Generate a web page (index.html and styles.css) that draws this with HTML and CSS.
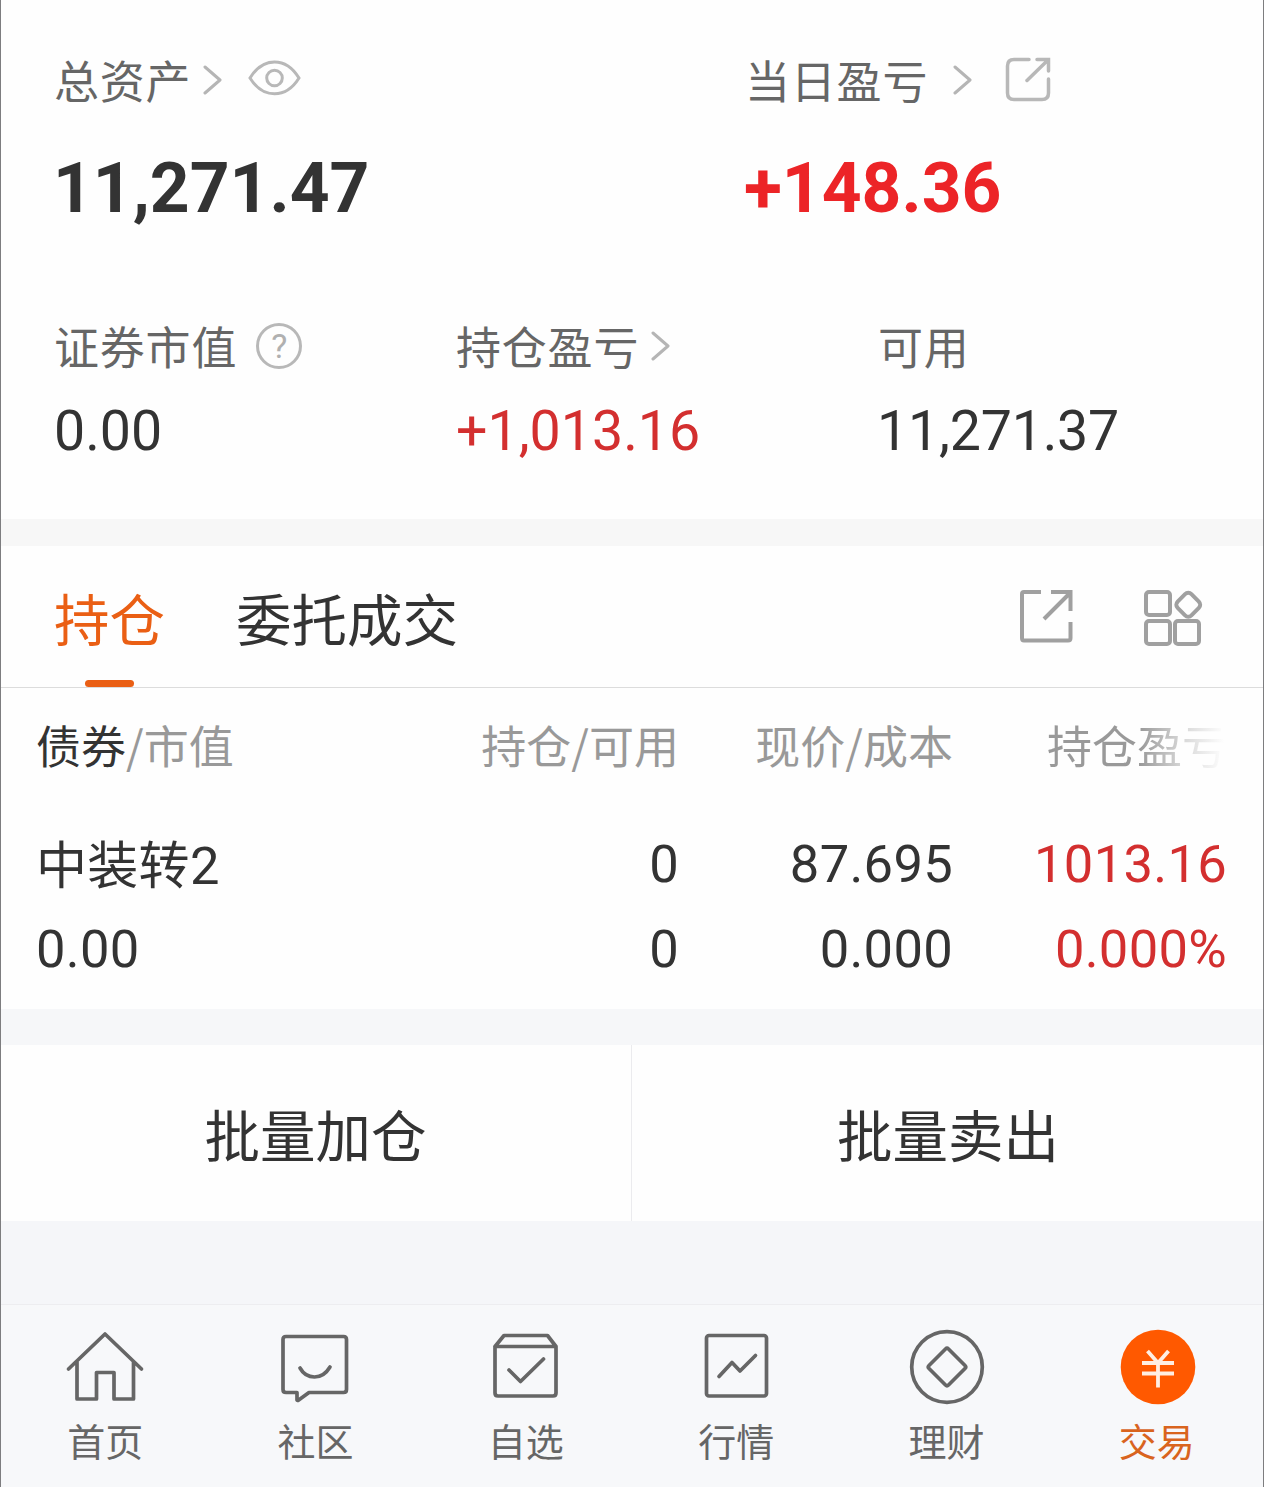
FILE: index.html
```html
<!DOCTYPE html>
<html lang="zh-CN">
<head>
<meta charset="utf-8">
<title>交易</title>
<link rel="stylesheet" href="styles.css">
</head>
<body>
<div class="app">
  <section class="summary">
    <div class="totals">
      <div class="total">
        <div class="label">总资产
          <svg class="chevron" width="20" height="30" viewBox="0 0 20 30"><path d="M2 2 17 15 2 28"/></svg>
          <svg class="eye" width="54" height="38" viewBox="0 0 54 38"><path d="M2 18C15-3.500 38-3.500 51 18 38 39 15 39 2 18Z"/><circle cx="26.500" cy="18" r="7.800"/></svg>
        </div>
        <div class="total-value num">11,271.47</div>
      </div>
      <div class="total">
        <div class="label label-today">当日盈亏
          <svg class="chevron" width="20" height="30" viewBox="0 0 20 30"><path d="M2 2 17 15 2 28"/></svg>
          <svg class="share-small" width="46" height="46" viewBox="0 0 46 46"><path d="M24 2.500H9Q2.500 2.500 2.500 9V36Q2.500 42.500 9 42.500H37Q43.500 42.500 43.500 36V22M32 2.500H43.500V14M43 3 22 23.500"/></svg>
        </div>
        <div class="total-value num up-strong">+148.36</div>
      </div>
    </div>
    <div class="metrics">
      <div class="metric">
        <div class="label">证券市值<span class="help">?</span></div>
        <div class="metric-value num">0.00</div>
      </div>
      <div class="metric">
        <div class="label">持仓盈亏
          <svg class="chevron" width="20" height="30" viewBox="0 0 20 30"><path d="M2 2 17 15 2 28"/></svg>
        </div>
        <div class="metric-value num up">+1,013.16</div>
      </div>
      <div class="metric">
        <div class="label">可用</div>
        <div class="metric-value num">11,271.37</div>
      </div>
    </div>
  </section>

  <section class="holdings">
    <div class="tabs">
      <div class="tab active">持仓</div>
      <div class="tab">委托成交</div>
      <div class="tools">
        <svg width="56" height="56" viewBox="0 0 56 56"><path d="M22 3H5Q3 3 3 5V49Q3 51.500 5 51.500H49Q51.500 51.500 51.500 49V33M32 3H51.500V22M51 4 25 30"/></svg>
        <svg width="60" height="58" viewBox="0 0 60 58"><rect x="3" y="3" width="24" height="23" rx="3"/><rect x="3" y="32" width="24" height="23" rx="3"/><rect x="32" y="32" width="24" height="23" rx="3"/><rect x="35.500" y="6" width="19.500" height="19.500" rx="4.500" transform="rotate(45 45.250 15.750)"/></svg>
      </div>
    </div>
    <div class="grid head">
      <div><span class="strong">债券</span>/市值</div>
      <div>持仓/可用</div>
      <div>现价/成本</div>
      <div class="fade">持仓盈亏</div>
    </div>
    <div class="grid row num">
      <div class="name">中装转<span class="num">2</span></div>
      <div>0</div>
      <div>87.695</div>
      <div class="up">1013.16</div>
    </div>
    <div class="grid row num">
      <div>0.00</div>
      <div>0</div>
      <div>0.000</div>
      <div class="up">0.000%</div>
    </div>
  </section>

  <section class="actions">
    <div class="action">批量加仓</div>
    <div class="action">批量卖出</div>
  </section>

  <nav class="nav">
    <div class="nav-item">
      <svg width="84" height="84" viewBox="63 1325 84 84"><path d="M68.500 1369 105 1334 141.500 1369M77 1362V1399H96.500V1372.500H114V1399H133.500V1362"/></svg>
      <span>首页</span>
    </div>
    <div class="nav-item">
      <svg width="84" height="84" viewBox="273 1325 84 84"><path d="M286 1336.500H343.500Q346.500 1336.500 346.500 1339.500V1389.500Q346.500 1392.500 343.500 1392.500H309L298 1400.500 297 1400V1392.500H286Q283 1392.500 283 1389.500V1339.500Q283 1336.500 286 1336.500ZM300 1368Q305 1377 314.500 1377 324 1377 330 1367"/></svg>
      <span>社区</span>
    </div>
    <div class="nav-item">
      <svg width="84" height="84" viewBox="483.500 1325 84 84"><path d="M494.500 1346.500V1393Q494.500 1396 497.500 1396H552.500Q555.500 1396 555.500 1393V1346.500M494.500 1346.500H555.500L547 1335.500H503.500L494.500 1346.500M508.500 1370 520 1381.500 543 1359"/></svg>
      <span>自选</span>
    </div>
    <div class="nav-item">
      <svg width="84" height="84" viewBox="694 1325 84 84"><rect x="706.500" y="1335.500" width="60" height="60.500" rx="2.500"/><path d="M719 1376.500 732 1362.500 740 1371 755.500 1355.500"/></svg>
      <span>行情</span>
    </div>
    <div class="nav-item">
      <svg width="84" height="84" viewBox="904.500 1325 84 84"><circle cx="947.500" cy="1367" r="35.300"/><path d="M946 1349Q947.500 1347.500 949 1349L965.500 1365.500Q967 1367 965.500 1368.500L949 1385Q947.500 1386.500 946 1385L929.500 1368.500Q928 1367 929.500 1365.500Z"/></svg>
      <span>理财</span>
    </div>
    <div class="nav-item current">
      <svg width="84" height="84" viewBox="1115 1325 84 84"><circle class="disc" cx="1158" cy="1367" r="37.300"/><path class="yuan" d="M1147.500 1351 1158 1363 1168.500 1351M1158 1362V1387.500M1142 1363H1174M1142 1373.500H1174"/></svg>
      <span>交易</span>
    </div>
  </nav>
</div>
</body>
</html>
```
FILE: styles.css
```css
* { box-sizing: border-box; }
body {
  margin: 0;
  background: #fefefe;
  font-family: "Noto Sans CJK SC", sans-serif;
  color: #333;
}
.app {
  position: relative;
  width: 1264px;
  height: 1487px;
  overflow: hidden;
  display: flex;
  flex-direction: column;
}
/* thin frame line along both sides */
.app::after {
  content: "";
  position: absolute;
  inset: 0;
  border: solid #7d7d7f;
  border-width: 0 1px;
  pointer-events: none;
}
svg { display: block; fill: none; flex: none; }
.num { font-family: Roboto, "Noto Sans CJK SC", sans-serif; }
.up { color: #d32f2f; }
.up-strong { color: #ec2427; }

.summary { height: 519px; flex: none; padding-left: 54px; }
.totals { display: grid; grid-template-columns: 691px 1fr; padding-top: 50px; }
.label {
  display: flex;
  align-items: center;
  height: 60px;
  font-size: 45px;
  line-height: 60px;
  letter-spacing: 0.8px;
  color: #666;
  white-space: nowrap;
}
.chevron { margin-left: 12px; stroke: #b5b5b5; stroke-width: 3; stroke-linecap: round; stroke-linejoin: round; }
.eye { margin: -2px 0 0 25px; stroke: #b8b8b8; stroke-width: 3; }
.label-today .chevron { margin-left: 25px; }
.share-small { margin-left: 32px; stroke: #b8b8b8; stroke-width: 3.5; stroke-linecap: round; }
.total-value { height: 80px; margin: 39px 0 0 -1px; font-size: 69.500px; line-height: 80px; font-weight: 700; }
.metrics { display: grid; grid-template-columns: 402px 422px 1fr; padding-top: 87px; }
.metric-value { height: 66px; margin-top: 23px; font-size: 55.500px; line-height: 66px; }
.metric:last-child .metric-value { margin-left: -1px; letter-spacing: -0.2px; }
.help {
  width: 46px;
  height: 46px;
  margin-left: 19px;
  border: 3px solid #b8b8b8;
  border-radius: 50%;
  font: 34px/41px Roboto, sans-serif;
  letter-spacing: 0;
  text-align: center;
  color: #b0b0b0;
}

.holdings { flex: none; height: 490px; border-top: 27px solid #f7f7f7; }
.tabs { display: flex; height: 142px; padding: 0 61px 0 54px; border-bottom: 1px solid #dcdcdc; }
.tab {
  display: flex;
  flex-direction: column;
  height: 141px;
  margin-right: 71px;
  padding-top: 36px;
  font-size: 55.500px;
  line-height: 70px;
}
.active { color: #ea5f14; }
.active::after {
  content: "";
  width: 49px;
  height: 7px;
  margin: auto auto 0;
  border-radius: 4px;
  background: #ea5f14;
}
.tools { display: flex; align-items: flex-start; gap: 68px; margin-left: auto; padding-top: 43px; }
.tools svg { stroke: #a0a0a0; stroke-width: 4; }
.grid {
  display: grid;
  grid-template-columns: 343px 300px 274px 274px;
  padding-left: 36px;
  text-align: right;
  white-space: nowrap;
}
.grid > :first-child { text-align: left; }
.head { padding-top: 27px; height: 134px; font-size: 45px; line-height: 60px; color: #999; }
.strong { color: #333; }
.fade {
  background: linear-gradient(90deg, #999 68%, #d8d8d8 84%, #fefefe 99%);
  background-clip: text;
  color: transparent;
}
.row { height: 85px; font-size: 52.500px; line-height: 85px; letter-spacing: 0.3px; }
.row .name { font-family: "Noto Sans CJK SC", sans-serif; font-size: 51px; line-height: 81px; }
.name .num { font-size: 52.500px; }

.actions {
  flex: none;
  display: grid;
  grid-template-columns: 632px 1fr;
  height: 212px;
  border-top: 36px solid #f6f7f9;
}
.action { font-size: 55.500px; line-height: 176px; text-align: center; }
.action:first-child { border-right: 1px solid #ebebee; }

.nav {
  flex: 1;
  display: grid;
  grid-template-columns: repeat(6, 1fr);
  padding: 20px 2px 0 0;
  margin-top: 83px;
  border-top: 1px solid #ededf0;
  background: #f7f8fa;
  box-shadow: 0 -83px 0 #f5f6f9;
}
.nav-item { display: flex; flex-direction: column; align-items: center; font-size: 38px; line-height: 50px; color: #666; }
.nav-item svg { stroke: #666; stroke-width: 3.700; stroke-linejoin: round; stroke-linecap: round; }
.nav-item span { margin-top: 6px; }
.current { color: #d9641e; }
.nav-item .disc { fill: #ff5900; stroke: none; }
.nav-item .yuan { stroke: #ffeee2; stroke-width: 3.800; stroke-linecap: butt; }
```
